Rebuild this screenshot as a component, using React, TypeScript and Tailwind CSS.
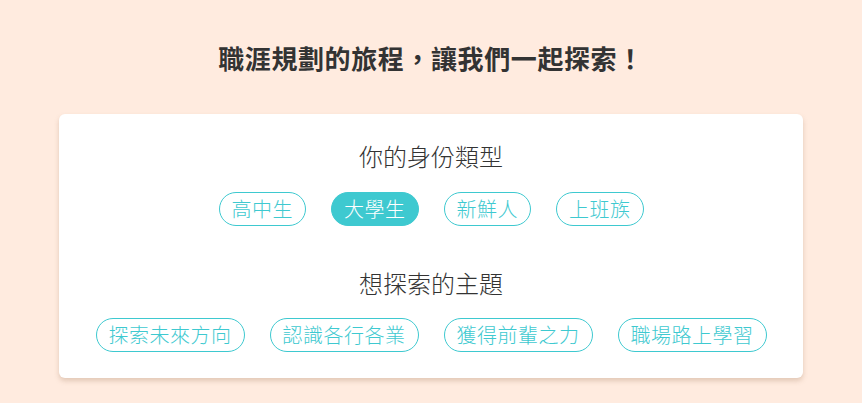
const identities = ["高中生", "大學生", "新鮮人", "上班族"];
const topics = ["探索未來方向", "認識各行各業", "獲得前輩之力", "職場路上學習"];

function Pill({ label, active }: { label: string; active?: boolean }) {
  return (
    <button
      type="button"
      className={
        active
          ? "h-[34px] rounded-full border border-[#3ec9d0] bg-[#3ec9d0] px-[12px] text-[20px] leading-[32px] font-light tracking-[0.5px] text-white"
          : "h-[34px] rounded-full border border-[#3ec9d0] bg-white px-[12px] text-[20px] leading-[32px] font-light tracking-[0.5px] text-[#3ec9d0]"
      }
    >
      {label}
    </button>
  );
}

export default function App() {
  return (
    <div
      lang="zh-Hant-TW"
      className="min-h-[403px] w-full bg-[#ffebdf] pt-[40px]"
      style={{ fontFamily: '"Noto Sans CJK TC", "Noto Sans", sans-serif' }}
    >
      <h1 className="text-center text-[26px] leading-[36px] font-bold tracking-[0.6px] text-[#333]">
        職涯規劃的旅程，讓我們一起探索！
      </h1>

      <div className="mx-auto mt-[38px] w-[744px] rounded-md bg-white pt-[24px] pb-[26px] shadow-[0_3px_5px_rgba(150,110,80,0.28)]">
        <h2 className="text-center text-[24px] leading-[36px] font-light text-[#333]">你的身份類型</h2>
        <div className="mt-[18px] flex justify-center gap-[25px]">
          {identities.map((s) => (
            <Pill key={s} label={s} active={s === "大學生"} />
          ))}
        </div>

        <h2 className="mt-[39px] text-center text-[24px] leading-[36px] font-light text-[#333]">想探索的主題</h2>
        <div className="mt-[17px] flex justify-center gap-[25px]">
          {topics.map((s) => (
            <Pill key={s} label={s} />
          ))}
        </div>
      </div>
    </div>
  );
}
